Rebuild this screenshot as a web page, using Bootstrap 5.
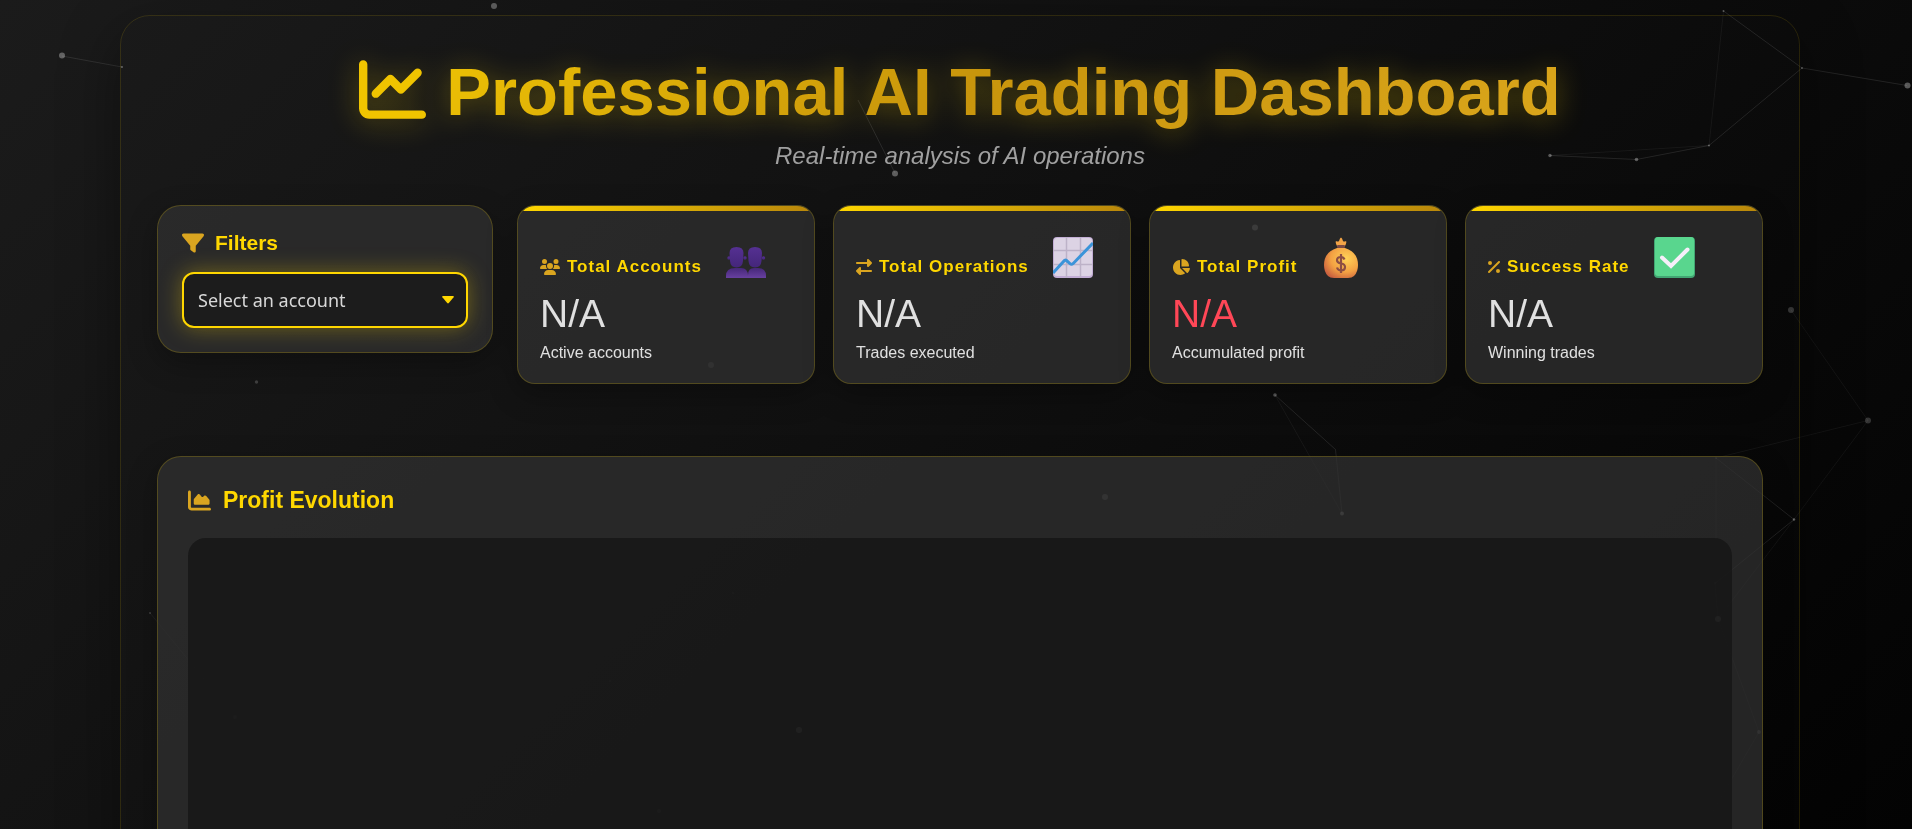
<!DOCTYPE html>
<html lang="en">
<head>
<meta charset="utf-8">
<meta name="viewport" content="width=device-width, initial-scale=1">
<title>Professional AI Trading Dashboard</title>
<link rel="stylesheet" href="https://cdn.jsdelivr.net/npm/bootstrap@5.3.0/dist/css/bootstrap.min.css">
<style>
  :root { --gold: #ffd700; --goldenrod: #daa520; --dark-gold: #b8860b; }
  html { background: #000; }
  body {
    font-family: "Liberation Sans", Arial, sans-serif;
    color: #e0e0e0;
    background: linear-gradient(135deg, #1b1b1b, #030303) fixed;
    min-height: 100vh;
    padding: 15px 112px 40px 120px;
  }
  .particles { position: fixed; top: 0; left: 0; z-index: 0; pointer-events: none; }
  .shell {
    position: relative; z-index: 1;
    padding: 36px;
    border: 1px solid rgba(255, 215, 0, .12);
    border-radius: 30px;
    box-shadow: 0 20px 60px rgba(0, 0, 0, .4);
  }
  .page-title {
    font-size: 67px; line-height: 80px; font-weight: 700; margin: 0 0 9px;
    background: linear-gradient(135deg, var(--gold), #c8950c, #e0ab20);
    -webkit-background-clip: text; background-clip: text; color: transparent;
    filter: drop-shadow(0 3px 14px rgba(255, 215, 0, .35));
  }
  .page-title svg { width: 67px; height: 67px; vertical-align: -8px; margin-right: 20px; fill: #f0c400; }
  .page-sub { font-size: 24px; line-height: 29px; font-style: italic; color: #a0a0a0; margin-bottom: 35px; }
  .panel {
    background: rgba(48, 48, 48, .75);
    border: 1px solid rgba(255, 215, 0, .2);
    box-shadow: 0 10px 30px rgba(0, 0, 0, .3);
  }
  .filter-panel { border-radius: 24px; padding: 24px; }
  .heading { color: var(--gold); font-weight: 700; margin: 0; }
  .heading svg, .stat-name svg { fill: var(--goldenrod); flex: none; }
  .filter-panel .heading { font-size: 21px; line-height: 26px; gap: 11px; margin-bottom: 16px; }
  .account-select {
    height: 56px; padding: 0 40px 0 14px;
    font-family: "Noto Sans", sans-serif; font-size: 18px; color: #d8d8d8;
    background-color: #1c1c1c;
    background-image: url("data:image/svg+xml,%3Csvg xmlns='http://www.w3.org/2000/svg' viewBox='0 0 12 8'%3E%3Cpath fill='%23ffd700' d='M1 0h10q1.500 0 .6 1.200L6.800 7q-.8.800-1.600 0L.4 1.200Q-.5 0 1 0z'/%3E%3C/svg%3E");
    background-size: 12px 8px; background-position: right 12px center;
    border: 2px solid var(--gold); border-radius: 12px;
    box-shadow: 0 0 22px rgba(255, 215, 0, .35);
  }
  .account-select:focus { border-color: var(--gold); box-shadow: 0 0 22px rgba(255, 215, 0, .35); }
  .stat-grid { display: grid; gap: 18px; grid-template-columns: repeat(auto-fit, minmax(280px, 1fr)); }
  .stat { position: relative; overflow: hidden; border-radius: 18px; padding: 22px; height: 179px; }
  .stat::before {
    content: ""; position: absolute; inset: 0 0 auto; height: 5px;
    background: linear-gradient(90deg, var(--gold), var(--dark-gold));
  }
  .stat-head { height: 50px; gap: 24px; margin-bottom: 13px; }
  .stat-name { color: var(--gold); font-size: 17px; line-height: 22px; font-weight: 700; letter-spacing: 1px; margin: 0; gap: 7px; white-space: nowrap; }
  .stat-head .emoji { flex: none; }
  .stat-value { font-size: 39px; line-height: 46px; }
  .stat-value.loss { color: #ff4757; }
  .stat-note { font-size: 16px; line-height: 24px; margin: 4px 0 0; }
  @media (min-width: 1200px) { .filter-col { flex: 0 0 336px; } }
  .chart-panel { margin-top: 72px; border-radius: 24px; padding: 30px; }
  .chart-panel .heading { font-size: 23px; line-height: 26px; gap: 12px; margin-bottom: 25px; }
  .chart-area { min-height: 420px; border-radius: 18px; background: rgba(20, 20, 20, .75); }
</style>
</head>
<body>
<svg class="particles" width="1912" height="829" viewBox="0 0 1912 829" aria-hidden="true">
  <g stroke="#fff" stroke-opacity=".1" fill="none">
    <path d="M62 56L122 67M858 100L895 173M1550 155.500L1636.500 159.500L1709 145.500L1802 68L1907 85.500M1802 68L1723.500 11M1275 395L1335.500 449.500L1342 513.500M1716 458L1794 519.500L1715 583.500L1718 619"/>
    <path stroke-opacity=".05" d="M1723.500 11L1709 145.500L1550 155.500M1275 395L1342 513.500M1791 310L1868 420.500L1794 519.500L1718 619L1759 732L1712 813M1868 420.500L1716 458V583M150 613L235 717L197 820"/>
  </g>
  <g fill="#fff" fill-opacity=".32">
    <circle cx="62" cy="55.500" r="3"/><circle cx="122" cy="67" r="1"/><circle cx="494" cy="6" r="3"/><circle cx="895" cy="173.500" r="3"/>
    <circle cx="1550" cy="155.500" r="1.700"/><circle cx="1636.500" cy="159.500" r="1.800"/><circle cx="1709" cy="145.500" r="1"/><circle cx="1723.500" cy="11" r="1"/>
    <circle cx="1802" cy="68" r="1"/><circle cx="1907.500" cy="85.500" r="3"/><circle cx="1275" cy="395" r="1.800"/><circle cx="1794" cy="519.500" r="1.200"/>
    <circle cx="1255" cy="227.500" r="3"/><circle cx="711" cy="365" r="3" fill-opacity=".15"/><circle cx="1105" cy="497" r="3" fill-opacity=".2"/><circle cx="1342" cy="513.500" r="2"/>
  </g>
  <g fill="#fff" fill-opacity=".18">
    <circle cx="256.500" cy="382" r="1.700"/><circle cx="1791" cy="310" r="3"/><circle cx="1868" cy="420.500" r="3"/><circle cx="1716" cy="458" r="1"/>
    <circle cx="1715" cy="583" r="1"/><circle cx="1718" cy="619" r="3" fill-opacity=".5"/><circle cx="1759" cy="732" r="2"/><circle cx="150" cy="613" r="1"/>
    <circle cx="235" cy="717" r="2"/><circle cx="799" cy="730" r="3" fill-opacity=".5"/><circle cx="610" cy="681" r="1"/><circle cx="733" cy="593" r="1"/><circle cx="659" cy="811" r="2"/>
  </g>
</svg>

<main class="shell">
  <header class="text-center">
    <h1 class="page-title"><svg viewBox="0 0 512 512" aria-hidden="true"><path d="M64 64c0-17.700-14.300-32-32-32S0 46.300 0 64V400c0 44.200 35.800 80 80 80H480c17.700 0 32-14.300 32-32s-14.300-32-32-32H80c-8.800 0-16-7.200-16-16V64zm406.600 86.600c12.500-12.500 12.500-32.800 0-45.300s-32.800-12.500-45.300 0L320 210.700l-57.400-57.400c-12.500-12.500-32.800-12.500-45.300 0l-112 112c-12.500 12.500-12.500 32.800 0 45.300s32.800 12.500 45.300 0L240 221.300l57.400 57.400c12.500 12.500 32.800 12.500 45.300 0l128-128z"/></svg>Professional AI Trading Dashboard</h1>
    <p class="page-sub">Real-time analysis of AI operations</p>
  </header>

  <div class="d-flex flex-column flex-xl-row gap-4 align-items-xl-start">
    <section class="filter-col panel filter-panel">
      <h2 class="heading d-flex align-items-center"><svg width="22" height="22" viewBox="0 0 512 512" aria-hidden="true"><path d="M3.900 54.900C10.500 40.900 24.500 32 40 32H472c15.500 0 29.500 8.900 36.100 22.900s4.600 30.500-5.200 42.500L320 320.900V448c0 12.100-6.800 23.200-17.700 28.600s-23.800 4.300-33.500-3l-64-48c-8.100-6-12.800-15.500-12.800-25.600V320.900L9 97.300C-.7 85.400-2.800 68.800 3.900 54.900z"/></svg><label for="account">Filters</label></h2>
      <select id="account" class="form-select account-select"><option>Select an account</option></select>
    </section>

    <div class="stat-grid flex-grow-1">
      <article class="panel stat">
        <div class="stat-head d-flex align-items-end">
          <h3 class="stat-name d-flex align-items-center"><svg width="20" height="16" viewBox="0 0 640 512" aria-hidden="true"><path d="M144 0a80 80 0 1 1 0 160A80 80 0 1 1 144 0zM512 0a80 80 0 1 1 0 160A80 80 0 1 1 512 0zM0 298.700C0 239.800 47.800 192 106.700 192h42.700c15.900 0 31 3.500 44.600 9.700c-1.300 7.200-1.900 14.700-1.900 22.300c0 38.200 16.800 72.500 43.300 96H21.300C9.600 320 0 310.400 0 298.700zM405.300 320c26.600-23.500 43.300-57.800 43.300-96c0-7.600-.7-15-1.900-22.300c13.600-6.300 28.700-9.700 44.600-9.700h42.700C592.200 192 640 239.800 640 298.700c0 11.800-9.600 21.300-21.300 21.300H405.300zM224 224a96 96 0 1 1 192 0 96 96 0 1 1-192 0zM128 485.300C128 411.700 187.700 352 261.300 352H378.700C452.300 352 512 411.700 512 485.300c0 14.700-11.900 26.700-26.700 26.700H154.700c-14.700 0-26.700-11.900-26.700-26.700z"/></svg>Total Accounts</h3>
          <svg class="emoji" width="40" height="41" viewBox="0 0 40 41" aria-hidden="true">
            <defs><linearGradient id="head" x2="0" y2="1"><stop stop-color="#553092"/><stop offset="1" stop-color="#44267a"/></linearGradient><linearGradient id="bust" x2="0" y2="1"><stop stop-color="#462779"/><stop offset="1" stop-color="#6840a0"/></linearGradient></defs>
            <g fill="url(#bust)"><path d="M0 41v-2q0-8 9-8h6q7 0 7 8v2z"/><path d="M22 41v-3q0-7 6-7h4q8 0 8 8v2z"/></g>
            <g fill="url(#head)"><circle cx="3" cy="21" r="1.700"/><circle cx="19" cy="21" r="1.700"/><circle cx="37.500" cy="21" r="1.700"/><path d="M3.500 16q0-6 7-6t7 6l-.5 8q-.5 6.500-6.500 6.500T4 24zM22 16q0-6 7-6t7 6l-.5 8q-.5 6.500-6.500 6.500T22.500 24z"/></g>
          </svg>
        </div>
        <div class="stat-value">N/A</div><p class="stat-note">Active accounts</p>
      </article>

      <article class="panel stat">
        <div class="stat-head d-flex align-items-end">
          <h3 class="stat-name d-flex align-items-center"><svg width="16" height="16" viewBox="0 0 512 512" aria-hidden="true"><path d="M32 96l320 0V32c0-12.900 7.800-24.600 19.800-29.600s25.700-2.200 34.900 6.900l96 96c6 6 9.400 14.100 9.400 22.600s-3.400 16.600-9.400 22.600l-96 96c-9.200 9.200-22.900 11.900-34.900 6.900s-19.800-16.600-19.800-29.600V160L32 160c-17.700 0-32-14.300-32-32s14.300-32 32-32zM480 352c17.700 0 32 14.300 32 32s-14.300 32-32 32H160v64c0 12.900-7.800 24.600-19.800 29.600s-25.700 2.200-34.900-6.900l-96-96c-6-6-9.400-14.100-9.400-22.600s3.400-16.600 9.400-22.600l96-96c9.200-9.200 22.900-11.900 34.900-6.900s19.800 16.600 19.800 29.600l0 64H480z"/></svg>Total Operations</h3>
          <svg class="emoji" width="40" height="41" viewBox="0 0 40 41" aria-hidden="true">
            <rect width="40" height="41" rx="4" fill="#c3aed6"/><rect x="1" y="1" width="38" height="38" rx="3" fill="#dcd3e4"/>
            <path d="M13.500 0v41M27.500 0v41M0 13.500h40M0 27.500h40" stroke="#bdb2c8" stroke-width="1.500"/>
            <path d="M0 36L11.500 23.500q1.500-1 3 1l2.500 2.200q1.500 1.200 3 0L40 6" fill="none" stroke="#3b94d9" stroke-width="3"/>
          </svg>
        </div>
        <div class="stat-value">N/A</div><p class="stat-note">Trades executed</p>
      </article>

      <article class="panel stat">
        <div class="stat-head d-flex align-items-end">
          <h3 class="stat-name d-flex align-items-center"><svg width="18" height="16" viewBox="0 0 576 512" aria-hidden="true"><path d="M304 240V16.600c0-9 7-16.600 16-16.600C443.700 0 544 100.300 544 224c0 9-7.600 16-16.600 16H304zM32 272C32 150.700 122.100 50.300 239 34.300c9.200-1.300 17 6.100 17 15.400V288L412.500 444.500c6.700 6.700 6.200 17.700-1.500 23.100C371.800 495.600 323.800 512 272 512C139.500 512 32 404.600 32 272zm526.400 16c9.300 0 16.600 7.800 15.400 17c-7.700 55.900-34.600 105.600-73.900 142.300c-6 5.600-15.400 5.200-21.200-.7L320 288H558.400z"/></svg>Total Profit</h3>
          <svg class="emoji" width="40" height="41" viewBox="0 0 40 41" aria-hidden="true">
            <defs><radialGradient id="bag" cx=".65" cy=".35" r=".75"><stop stop-color="#ffd257"/><stop offset=".6" stop-color="#f3a143"/><stop offset="1" stop-color="#c9603f"/></radialGradient></defs>
            <path d="M15 4q2 1 3 0 1-3.500 2-3.500T22 4q1 1 3 0 1 1-1 5h-8q-2-4-1-5z" fill="#f3a447"/>
            <path d="M16 11h8q13 4 13 17 0 7-4 11-2 2-6 2H13q-4 0-6-2-4-4-4-11 0-13 13-17z" fill="url(#bag)"/>
            <rect x="16" y="8" width="8" height="3" rx="1" fill="#7b4a44"/>
            <path d="M23.500 22.500q-1-2.500-3.500-2.500-4 0-4 3.300 0 2.500 4 3.200t4 3.500q0 3.500-4 3.500-3 0-4-3M20 17v19" fill="none" stroke="#8d4e43" stroke-width="2.200"/>
          </svg>
        </div>
        <div class="stat-value loss">N/A</div><p class="stat-note">Accumulated profit</p>
      </article>

      <article class="panel stat">
        <div class="stat-head d-flex align-items-end">
          <h3 class="stat-name d-flex align-items-center"><svg width="12" height="16" viewBox="0 0 384 512" aria-hidden="true"><path d="M374.600 118.600c12.500-12.500 12.500-32.800 0-45.300s-32.800-12.500-45.300 0l-320 320c-12.500 12.500-12.500 32.800 0 45.300s32.800 12.500 45.300 0l320-320zM128 128A64 64 0 1 0 0 128a64 64 0 1 0 128 0zM384 384a64 64 0 1 0-128 0 64 64 0 1 0 128 0z"/></svg>Success Rate</h3>
          <svg class="emoji" width="41" height="41" viewBox="0 0 41 41" aria-hidden="true">
            <rect width="41" height="41" rx="4" fill="#42a673"/><rect x="1" y="0" width="39" height="39" rx="3" fill="#59d68e"/>
            <path d="M8 20.500l9 8.500L33.500 12.500" fill="none" stroke="#f6effa" stroke-width="4" stroke-linecap="round"/>
          </svg>
        </div>
        <div class="stat-value">N/A</div><p class="stat-note">Winning trades</p>
      </article>
    </div>
  </div>

  <section class="panel chart-panel">
    <h2 class="heading d-flex align-items-center"><svg width="23" height="23" viewBox="0 0 512 512" aria-hidden="true"><path d="M64 64c0-17.700-14.300-32-32-32S0 46.300 0 64V400c0 44.200 35.800 80 80 80H480c17.700 0 32-14.300 32-32s-14.300-32-32-32H80c-8.800 0-16-7.200-16-16V64zm96 288H448c17.700 0 32-14.300 32-32V251.800c0-7.600-2.700-15-7.700-20.800l-65.800-76.800c-12.100-14.200-33.700-15-46.900-1.800l-21 21c-10 10-26.400 9.200-35.400-1.600l-39.200-47c-12.600-15.100-35.700-15.400-48.700-.6L135.900 215c-5.100 5.800-7.900 13.300-7.900 21.100v84c0 17.700 14.300 32 32 32z"/></svg>Profit Evolution</h2>
    <div class="chart-area"></div>
  </section>
</main>
<script src="https://cdn.jsdelivr.net/npm/bootstrap@5.3.0/dist/js/bootstrap.bundle.min.js"></script>
</body>
</html>
